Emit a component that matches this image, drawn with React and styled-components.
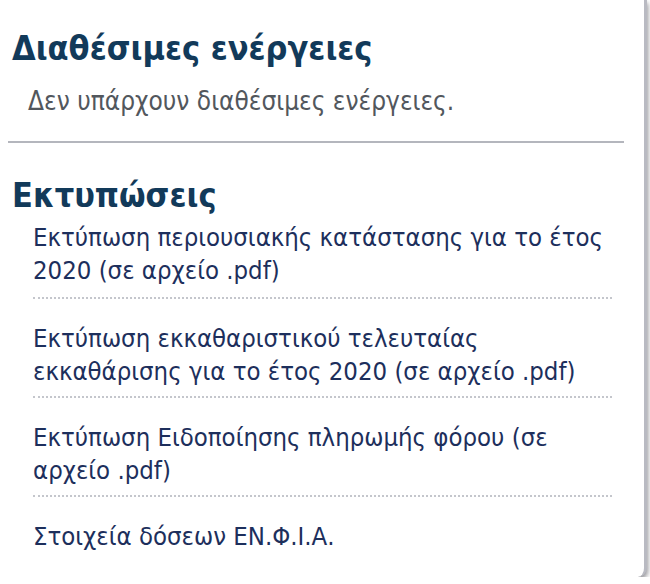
import React from "react";
import styled, { createGlobalStyle } from "styled-components";

const GlobalStyle = createGlobalStyle`
  html, body {
    margin: 0;
    padding: 0;
    background: #ffffff;
  }
  body {
    font-family: "DejaVu Sans Condensed", "DejaVu Sans", sans-serif;
  }
`;

const Panel = styled.div`
  box-sizing: border-box;
  width: 647px;
  height: 577px;
  background: #ffffff;
  border-right: 3px solid #b9bac2;
  border-bottom-right-radius: 9px;
  box-shadow: 1px 3px 5px rgba(60, 60, 70, 0.55);
  padding: 28px 0 0 0;
  overflow: hidden;
`;

const Section = styled.section`
  padding: 0 0 0 12px;
  margin-top: ${(p) => p.$gap || 0}px;
`;

const Heading = styled.h2`
  margin: 0;
  font-size: 34px;
  line-height: 40px;
  font-weight: bold;
  color: #123a5a;
`;

const Empty = styled.p`
  margin: 18px 0 0 16px;
  font-size: 26px;
  line-height: 30px;
  color: #52575d;
`;

const Divider = styled.hr`
  margin: 25px 20px 0 8px;
  border: 0;
  height: 2px;
  background: #b4b6bd;
`;

const List = styled.ul`
  list-style: none;
  margin: 6px 0 0 33px;
  padding: 0;
  width: 579px;
`;

const Item = styled.li`
  padding: ${(p) => (p.$first ? "0" : "23px")} 0 ${(p) => (p.$first ? 10 : 8)}px;
  border-bottom: ${(p) => (p.$last ? "0" : "2px dotted #c4c6cc")};
`;

const Link = styled.a`
  font-size: 25.5px;
  line-height: 33px;
  color: #1d2f5c;
  text-decoration: none;
  cursor: pointer;
`;

const prints = [
  "Εκτύπωση περιουσιακής κατάστασης για το έτος 2020 (σε αρχείο .pdf)",
  "Εκτύπωση εκκαθαριστικού τελευταίας εκκαθάρισης για το έτος 2020 (σε αρχείο .pdf)",
  "Εκτύπωση Ειδοποίησης πληρωμής φόρου (σε αρχείο .pdf)",
  "Στοιχεία δόσεων ΕΝ.Φ.Ι.Α.",
];

export default function App() {
  return (
    <>
      <GlobalStyle />
      <Panel>
        <Section>
          <Heading>Διαθέσιμες ενέργειες</Heading>
          <Empty>Δεν υπάρχουν διαθέσιμες ενέργειες.</Empty>
        </Section>
        <Divider />
        <Section $gap={32}>
          <Heading>Εκτυπώσεις</Heading>
        </Section>
        <List>
          {prints.map((text, i) => (
            <Item key={text} $first={i === 0} $last={i === prints.length - 1}>
              <Link>{text}</Link>
            </Item>
          ))}
        </List>
      </Panel>
    </>
  );
}
